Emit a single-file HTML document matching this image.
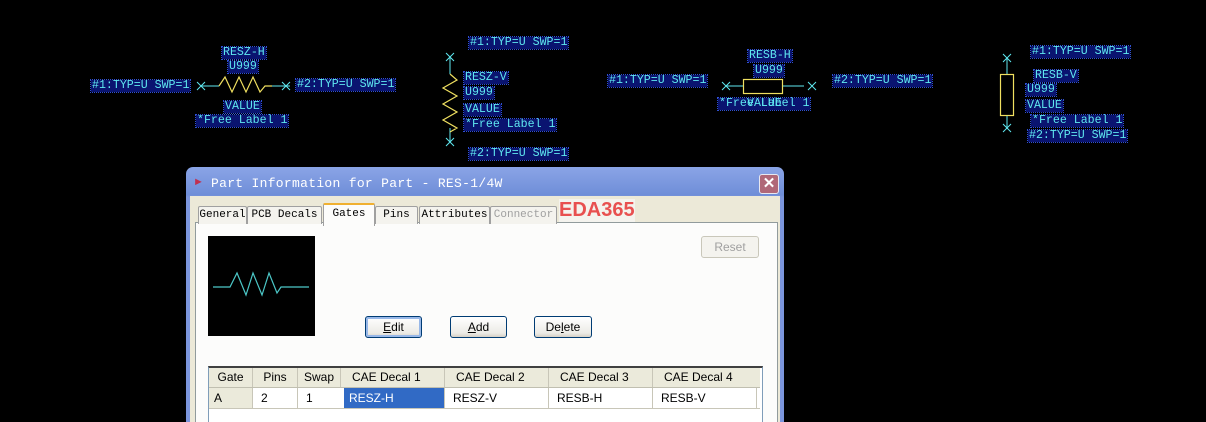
<!DOCTYPE html>
<html style="overflow:hidden;height:422px"><head><style>
body{margin:0;width:1206px;height:422px;background:#000;position:relative;overflow:hidden;font-family:"Liberation Sans",sans-serif}
.l{position:absolute;font-family:"Liberation Mono",monospace;font-size:11.6px;line-height:12px;color:#5fe8f0;background:#0a1470;outline:1px dotted #3050d0;white-space:nowrap;padding:0 1px}
.a{position:absolute}
.tab{position:absolute;top:206px;height:17px;background:#f4f3ee;border:1px solid #a0a0a0;border-bottom:none;font-family:"Liberation Mono",monospace;font-size:11px;line-height:17px;text-align:center;color:#000;border-radius:2px 2px 0 0;white-space:nowrap}
.btn{position:absolute;height:20px;border:1px solid #003c74;border-radius:3px;background:linear-gradient(#fff,#ecebe6 80%,#d6d0c5);font-size:12px;line-height:20px;text-align:center;color:#000}
.c{position:absolute;font-size:12px;line-height:19px;color:#000;box-sizing:border-box;padding-left:8px}
</style></head><body>
<svg class="a" style="left:0;top:0" width="1206" height="170">
<g stroke="#5fe8f0" stroke-width="1" fill="none">
<path d="M197 82l8 8M197 90l8-8M201 86h18M272 86h18M282 82l8 8M282 90l8-8"/>
<path d="M446 53l8 8M446 61l8-8M450 57v17M450 128v14M446 138l8 8M446 146l8-8"/>
<path d="M722 82l8 8M722 90l8-8M726 86h17M782 86h22M808 82l8 8M808 90l8-8"/>
<path d="M1003 54l8 8M1003 62l8-8M1007 58v16M1007 115v13M1003 124l8 8M1003 132l8-8"/>
</g>
<g stroke="#f0e060" stroke-width="1.2" fill="none">
<path d="M219 86l6-9 7 15 7-15 7 15 7-15 7 15 5-6h7"/>
<path d="M450 74l7 6-14 8 14 8-14 8 14 8-14 8 14 8-7 4"/>
<rect x="743.5" y="79.5" width="39" height="14"/>
<rect x="1000.5" y="74.5" width="13" height="41"/>
</g>
</svg>
<div class="l" style="left:222px;top:47px">RESZ-H</div>
<div class="l" style="left:228px;top:61px">U999</div>
<div class="l" style="left:91px;top:80px">#1:TYP=U SWP=1</div>
<div class="l" style="left:296px;top:79px">#2:TYP=U SWP=1</div>
<div class="l" style="left:224px;top:101px">VALUE</div>
<div class="l" style="left:196px;top:115px">*Free Label 1</div>
<div class="l" style="left:469px;top:37px">#1:TYP=U SWP=1</div>
<div class="l" style="left:464px;top:72px">RESZ-V</div>
<div class="l" style="left:464px;top:87px">U999</div>
<div class="l" style="left:464px;top:104px">VALUE</div>
<div class="l" style="left:464px;top:119px">*Free Label 1</div>
<div class="l" style="left:469px;top:148px">#2:TYP=U SWP=1</div>
<div class="l" style="left:608px;top:75px">#1:TYP=U SWP=1</div>
<div class="l" style="left:748px;top:50px">RESB-H</div>
<div class="l" style="left:754px;top:65px">U999</div>
<div class="l" style="left:718px;top:98px">*Free Label 1</div>
<div class="l" style="left:746px;top:98px;background:none;outline:none">VALUE</div>
<div class="l" style="left:833px;top:75px">#2:TYP=U SWP=1</div>
<div class="l" style="left:1031px;top:46px">#1:TYP=U SWP=1</div>
<div class="l" style="left:1034px;top:70px">RESB-V</div>
<div class="l" style="left:1026px;top:84px">U999</div>
<div class="l" style="left:1026px;top:100px">VALUE</div>
<div class="l" style="left:1031px;top:115px">*Free Label 1</div>
<div class="l" style="left:1028px;top:130px">#2:TYP=U SWP=1</div>

<div class="a" style="left:186px;top:167px;width:598px;height:255px;background:linear-gradient(#8aa4e6,#6f8ed8 28px,#7b95dc 30px);border-radius:7px 7px 0 0"></div>
<div class="a" style="left:193px;top:176px;color:#c03050;font-size:11px">&#9658;</div>
<div class="a" style="left:211px;top:176px;color:#fff;font-family:'Liberation Mono',monospace;font-size:13px;letter-spacing:0.3px">Part Information for Part - RES-1/4W</div>
<div class="a" style="left:759px;top:174px;width:18px;height:18px;border:1px solid #e8e8f0;border-radius:3px;background:#b06878;color:#fff;font-size:15px;line-height:18px;text-align:center;font-weight:bold">✕</div>
<div class="a" style="left:190px;top:196px;width:590px;height:226px;background:#ece9d8"></div>
<div class="a" style="left:195px;top:222px;width:581px;height:200px;background:#fcfcfb;border:1px solid #919b9c;border-bottom:none"></div>
<div class="tab" style="left:198px;width:47px">General</div>
<div class="tab" style="left:247px;width:73px">PCB Decals</div>
<div class="tab" style="left:323px;top:203px;height:21px;width:50px;background:#fcfcfb;border-top:2px solid #f0b030;line-height:19px">Gates</div>
<div class="tab" style="left:375px;width:41px">Pins</div>
<div class="tab" style="left:419px;width:69px">Attributes</div>
<div class="tab" style="left:490px;width:65px;color:#a0a0a0">Connector</div>
<div class="a" style="left:559px;top:199px;color:#e85050;font-weight:bold;font-size:20px;background:#f4f3ee">EDA365</div>
<div class="a" style="left:208px;top:236px;width:107px;height:100px;background:#000"></div>
<svg class="a" style="left:208px;top:236px" width="107" height="100"><path d="M5 51h17l7-14 9 22 7-22 9 22 7-22 8 20 4-6h28" stroke="#4cc8c8" fill="none" stroke-width="1.2"/></svg>
<div class="btn" style="left:701px;top:236px;width:56px;border-color:#c9c7ba;color:#a0a0a0;background:#f4f3ee">Reset</div>
<div class="btn" style="left:365px;top:316px;width:55px;box-shadow:inset 0 0 0 2px #98b8e8"><u>E</u>dit</div>
<div class="btn" style="left:450px;top:316px;width:55px"><u>A</u>dd</div>
<div class="btn" style="left:534px;top:316px;width:56px">De<u>l</u>ete</div>
<div class="a" style="left:208px;top:366px;width:553px;height:60px;background:#fff;border:1px solid #7f9db9;border-top:2px solid #404040"></div>
<div class="a" style="left:209px;top:368px;width:551px;height:19px;background:#ebeadb;border-bottom:1px solid #c0bfb0"></div>
<div class="c" style="left:209px;top:368px;width:43px;text-align:center;padding:0">Gate</div>
<div class="c" style="left:252px;top:368px;width:45px;text-align:center;padding:0;border-left:1px solid #c8c6b8">Pins</div>
<div class="c" style="left:297px;top:368px;width:43px;text-align:center;padding:0;border-left:1px solid #c8c6b8">Swap</div>
<div class="c" style="left:340px;top:368px;width:104px;padding-left:11px;border-left:1px solid #c8c6b8">CAE Decal 1</div>
<div class="c" style="left:444px;top:368px;width:104px;padding-left:11px;border-left:1px solid #c8c6b8">CAE Decal 2</div>
<div class="c" style="left:548px;top:368px;width:104px;padding-left:11px;border-left:1px solid #c8c6b8">CAE Decal 3</div>
<div class="c" style="left:652px;top:368px;width:105px;padding-left:11px;border-left:1px solid #c8c6b8">CAE Decal 4</div>
<div class="c" style="left:209px;top:388px;width:43px;height:21px;background:#ebeadb;padding-left:5px;line-height:21px">A</div>
<div class="c" style="left:252px;top:388px;width:45px;height:21px;border-left:1px solid #c8c6b8;line-height:21px">2</div>
<div class="c" style="left:297px;top:388px;width:47px;height:21px;border-left:1px solid #c8c6b8;line-height:21px">1</div>
<div class="c" style="left:344px;top:388px;width:100px;height:21px;background:#316ac5;color:#fff;padding-left:5px;line-height:21px">RESZ-H</div>
<div class="c" style="left:444px;top:388px;width:104px;height:21px;border-left:1px solid #c8c6b8;line-height:21px">RESZ-V</div>
<div class="c" style="left:548px;top:388px;width:104px;height:21px;border-left:1px solid #c8c6b8;line-height:21px">RESB-H</div>
<div class="c" style="left:652px;top:388px;width:105px;height:21px;border-left:1px solid #c8c6b8;border-right:1px solid #c8c6b8;line-height:21px">RESB-V</div>
<div class="a" style="left:209px;top:408px;width:551px;height:1px;background:#c8c6b8"></div>
</body></html>
